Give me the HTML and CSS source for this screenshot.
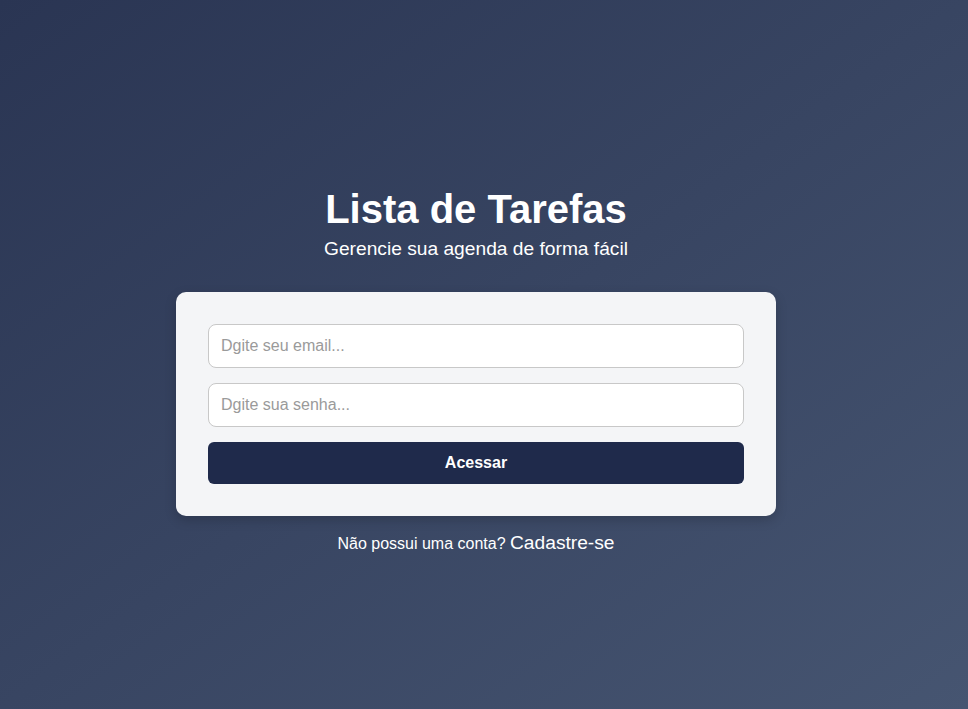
FILE: index.html
```html
<!DOCTYPE html>
<html lang="pt-BR">
<head>
<meta charset="UTF-8">
<title>Lista de Tarefas</title>
<link rel="stylesheet" href="styles.css">
</head>
<body>
<main class="page">
  <h1 class="title">Lista de Tarefas</h1>
  <p class="subtitle">Gerencie sua agenda de forma fácil</p>
  <form class="card">
    <input class="field" type="email" placeholder="Dgite seu email...">
    <input class="field" type="password" placeholder="Dgite sua senha...">
    <button class="btn" type="button">Acessar</button>
  </form>
  <p class="footer">Não possui uma conta? <a class="link" href="#">Cadastre-se</a></p>
</main>
</body>
</html>
```

FILE: styles.css
```css
* { box-sizing: border-box; }
html, body { margin: 0; height: 100%; }
body {
  font-family: "Liberation Sans", Arial, sans-serif;
  background: linear-gradient(to bottom right, #2a3553, #465571);
  color: #fff;
}
.page {
  display: flex;
  flex-direction: column;
  align-items: center;
  padding: 186px 16px 0 0;
}
.title {
  margin: 0;
  font-size: 40px;
  font-weight: bold;
  line-height: 46px;
}
.subtitle {
  margin: 6px 0 0;
  font-size: 19.2px;
  line-height: 22px;
}
.card {
  margin-top: 32px;
  width: 600px;
  background: #f4f5f7;
  border-radius: 10px;
  padding: 32px;
  display: flex;
  flex-direction: column;
  gap: 15px;
  box-shadow: 0 4px 12px rgba(0, 0, 0, 0.18);
}
.field {
  height: 44px;
  border: 1px solid #c8c8c8;
  border-radius: 8px;
  background: #fff;
  padding: 0 12px;
  font-family: inherit;
  font-size: 16px;
  color: #333;
}
.field::placeholder { color: #9a9a9a; }
.btn {
  height: 42px;
  border: none;
  border-radius: 6px;
  background: #1f2a4b;
  color: #fff;
  font-family: inherit;
  font-size: 16px;
  font-weight: bold;
}
.footer {
  margin: 16px 0 0;
  font-size: 16px;
  line-height: 22px;
}
.link {
  color: #fff;
  text-decoration: none;
  font-size: 19.2px;
}
```
